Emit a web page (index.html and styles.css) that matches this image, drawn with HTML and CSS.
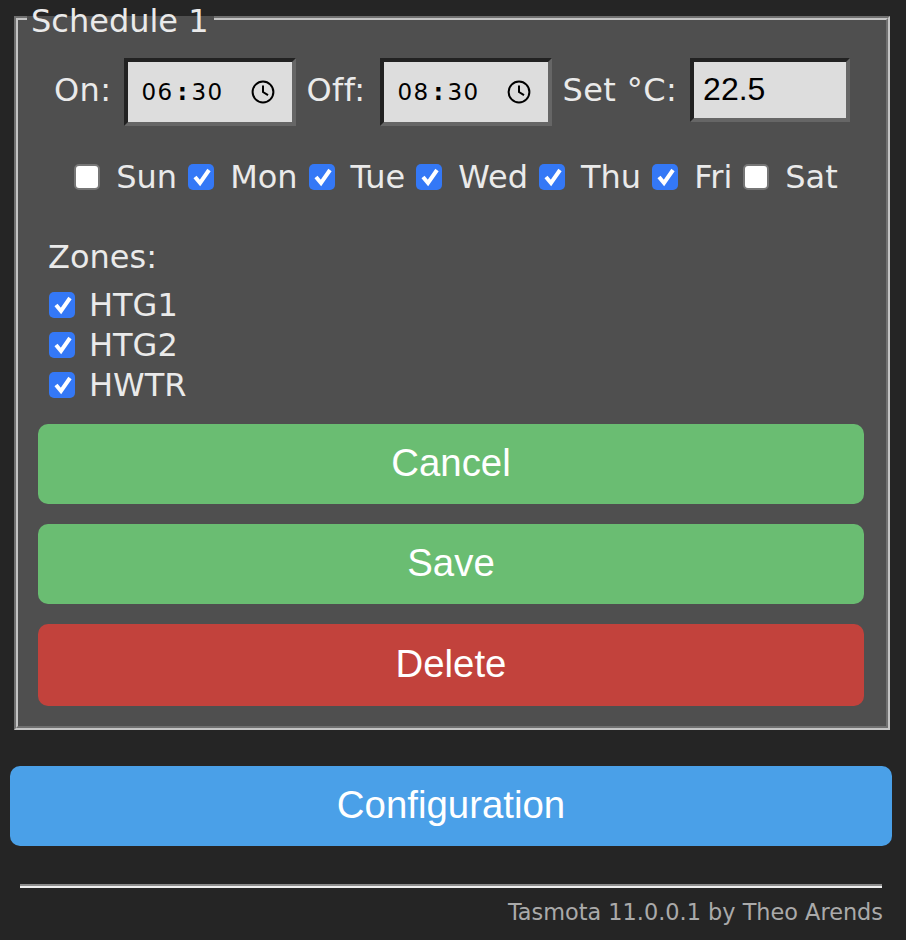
FILE: index.html
```html
<!DOCTYPE html>
<html lang="en">
<head>
<meta charset="utf-8">
<title>Schedule</title>
<link rel="stylesheet" href="styles.css">
</head>
<body>
<main class="page">
  <fieldset class="panel">
    <legend class="legend">Schedule 1</legend>
    <div class="times">
      <span class="time-label">On:</span>
      <div class="field field-time"><span class="clock-text">06<span class="clock-sep">:</span>30</span>
        <svg class="clock" viewBox="0 0 24 24"><circle cx="12" cy="12" r="10.4"/><path d="M12 5.5V12l5 3.2"/></svg></div>
      <span class="time-label time-label-wide">Off:</span>
      <div class="field field-time"><span class="clock-text">08<span class="clock-sep">:</span>30</span>
        <svg class="clock" viewBox="0 0 24 24"><circle cx="12" cy="12" r="10.4"/><path d="M12 5.5V12l5 3.2"/></svg></div>
      <span class="time-label">Set °C:</span>
      <input class="field field-num" type="text" value="22.5">
    </div>
    <div class="days">
      <label class="check"><input type="checkbox"><span>Sun</span></label>
      <label class="check"><input type="checkbox" checked><span>Mon</span></label>
      <label class="check"><input type="checkbox" checked><span>Tue</span></label>
      <label class="check"><input type="checkbox" checked><span>Wed</span></label>
      <label class="check"><input type="checkbox" checked><span>Thu</span></label>
      <label class="check"><input type="checkbox" checked><span>Fri</span></label>
      <label class="check"><input type="checkbox"><span>Sat</span></label>
    </div>
    <div class="zones-title">Zones:</div>
    <div class="zones">
      <label class="check"><input type="checkbox" checked><span>HTG1</span></label>
      <label class="check"><input type="checkbox" checked><span>HTG2</span></label>
      <label class="check"><input type="checkbox" checked><span>HWTR</span></label>
    </div>
    <div class="actions">
      <button class="btn btn-green" type="button">Cancel</button>
      <button class="btn btn-green" type="button">Save</button>
      <button class="btn btn-red btn-tall" type="button">Delete</button>
    </div>
  </fieldset>
  <button class="btn btn-blue" type="button">Configuration</button>
  <hr class="rule">
  <div class="footer">Tasmota 11.0.0.1 by Theo Arends</div>
</main>
</body>
</html>
```
FILE: styles.css
```css
* { box-sizing: border-box; }
html, body { margin: 0; height: 100%; }
body {
  background: #252525;
  color: #eaeaea;
  font-family: "DejaVu Sans", sans-serif;
  font-size: 32px;
  overflow: hidden;
}
.page { padding: 8px 14px 0 14px; display: flex; flex-direction: column; }
.panel {
  margin: 0;
  padding: 0 22px 22px 22px;
  width: 874px;
  height: 722px;
  background: #4f4f4f;
  border: 4px groove #c4c4c4;
  display: block;
}
.legend { padding: 0 5px 0 4px; margin-left: -13px; font-size: 32px; line-height: 26px; height: 20px; }
.times { display: flex; align-items: flex-start; margin-top: 30px; margin-left: 14px; }
.time-label { line-height: 64px; margin-right: 13px; letter-spacing: 0.4px; }
.time-label-wide { margin-right: 15px; }
.field {
  background: #dddddd;
  border-style: solid;
  border-width: 4px;
  border-color: #222 #666 #666 #222;
  color: #000;
  margin-right: 10px;
}
.field-time {
  width: 172px;
  height: 68px;
  display: flex;
  align-items: center;
  justify-content: space-between;
  padding: 0 17px 0 13px;
}
.clock-text { font-family: "DejaVu Sans", sans-serif; font-size: 23px; letter-spacing: 1.5px; }
.clock-sep { margin: 0 3px 0 4px; font-weight: 700; }
.clock { width: 24px; height: 24px; fill: none; stroke: #000; stroke-width: 2; }
.field-num {
  width: 160px;
  height: 64px;
  padding: 0 9px 2px;
  font-family: "Liberation Sans", sans-serif;
  font-size: 32px;
  outline: none;
  margin: 0;
}
.days { display: flex; justify-content: center; gap: 11px; margin-top: 31px; padding-left: 8px; }
.check { display: flex; align-items: center; gap: 16px; height: 40px; line-height: 40px; }
.check input {
  appearance: none;
  width: 26px;
  height: 26px;
  margin: 0;
  flex: none;
  background: #fff;
  border: 2px solid #767676;
  border-radius: 5px;
}
.check input:checked {
  border: 0;
  background: #3478f6 url("data:image/svg+xml,%3Csvg xmlns='http://www.w3.org/2000/svg' viewBox='0 0 26 26'%3E%3Cpath d='M7 13l5 6 9-13' fill='none' stroke='white' stroke-width='4'/%3E%3C/svg%3E") center / 100% 100% no-repeat;
}
.zones-title { margin: 40px 0 0 8px; line-height: 40px; }
.zones { display: flex; flex-direction: column; margin: 8px 0 0 9px; }
.zones .check { gap: 14px; }
.actions { display: flex; flex-direction: column; gap: 20px; margin-top: 19px; margin-left: -2px; width: 826px; }
.btn {
  display: block;
  width: 100%;
  height: 80px;
  border: 0;
  border-radius: 10px;
  padding: 0 0 3px;
  color: #fff;
  font-family: "Liberation Sans", sans-serif;
  font-size: 38.4px;
}
.btn-tall { height: 82px; }
.btn-green { background: #6abd72; }
.btn-red { background: #c2423c; }
.btn-blue { background: #4aa0e8; width: 882px; margin: 36px 0 0 -4px; flex: none; }
.rule {
  width: 862px;
  height: 4px;
  margin: 38px 0 0 6px;
  border: 0;
  border-top: 2px solid #8c8c8c;
  border-bottom: 2px solid #eee;
  flex: none;
}
.footer { text-align: right; color: #aaa; font-size: 22.4px; line-height: 28px; width: 869px; margin-top: 10px; }
```
